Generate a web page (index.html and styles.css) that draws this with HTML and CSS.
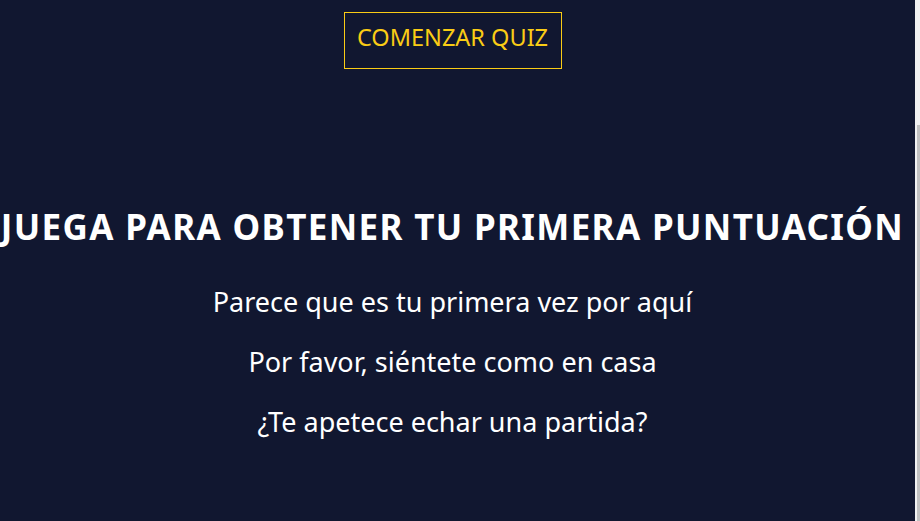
FILE: index.html
```html
<!DOCTYPE html>
<html lang="es">
<head>
<meta charset="utf-8">
<title>Quiz</title>
<link rel="stylesheet" href="styles.css">
</head>
<body>
<main class="page">
  <button class="start-btn">COMENZAR QUIZ</button>
  <section class="empty-score">
    <h1 class="title">JUEGA PARA OBTENER TU PRIMERA PUNTUACIÓN</h1>
    <div class="lines">
      <p class="line">Parece que es tu primera vez por aquí</p>
      <p class="line">Por favor, siéntete como en casa</p>
      <p class="line">¿Te apetece echar una partida?</p>
    </div>
  </section>
</main>
<div class="scrollbar"><div class="scrollbar-thumb"></div></div>
</body>
</html>
```

FILE: styles.css
```css
html, body {
  margin: 0;
  padding: 0;
  height: 100%;
  overflow: hidden;
}
body {
  background: #111730;
  font-family: "Noto Sans", "Open Sans", sans-serif;
  color: #ffffff;
}
.page {
  width: 905px;
  display: flex;
  flex-direction: column;
  align-items: center;
  padding-top: 12px;
}
.start-btn {
  font-family: inherit;
  font-size: 23.5px;
  line-height: 32px;
  color: #facc15;
  background: transparent;
  border: 1px solid #facc15;
  height: 57px;
  width: 218px;
  padding: 0 0 7px 0;
  cursor: pointer;
}
.empty-score {
  margin-top: 136px;
  display: flex;
  flex-direction: column;
  align-items: center;
}
.title {
  margin: 0;
  font-size: 35px;
  line-height: 44px;
  font-weight: 700;
  letter-spacing: 1.35px;
  white-space: nowrap;
}
.lines {
  margin-top: 31px;
  display: flex;
  flex-direction: column;
  align-items: center;
  gap: 16px;
}
.line {
  margin: 0;
  font-size: 27px;
  line-height: 44px;
}
.scrollbar {
  position: fixed;
  top: 0;
  right: 0;
  width: 5px;
  height: 100%;
  background: #f1f1f1;
}
.scrollbar-thumb {
  position: absolute;
  top: 125px;
  left: 2px;
  right: 0;
  bottom: 0;
  background: #c1c1c1;
}
```
